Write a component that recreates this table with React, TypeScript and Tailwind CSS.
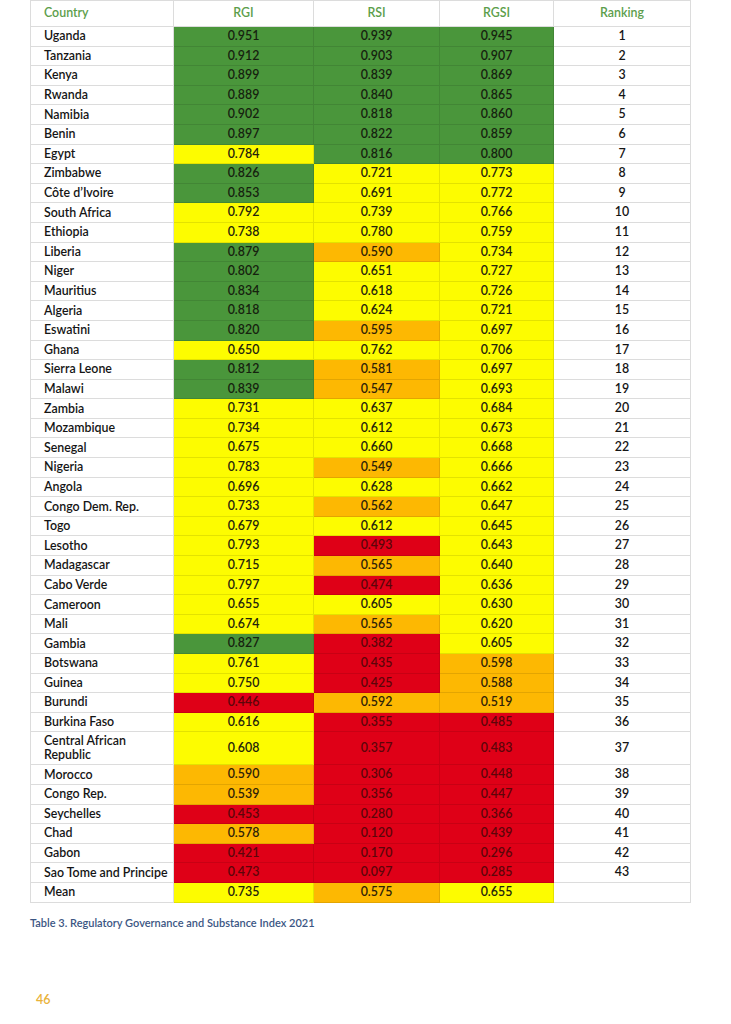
import React from "react"

type C = "G" | "Y" | "O" | "R"

const rows: [string, string, C, string, C, string, C, string][] = [
  ["Uganda", "0.951", "G", "0.939", "G", "0.945", "G", "1"],
  ["Tanzania", "0.912", "G", "0.903", "G", "0.907", "G", "2"],
  ["Kenya", "0.899", "G", "0.839", "G", "0.869", "G", "3"],
  ["Rwanda", "0.889", "G", "0.840", "G", "0.865", "G", "4"],
  ["Namibia", "0.902", "G", "0.818", "G", "0.860", "G", "5"],
  ["Benin", "0.897", "G", "0.822", "G", "0.859", "G", "6"],
  ["Egypt", "0.784", "Y", "0.816", "G", "0.800", "G", "7"],
  ["Zimbabwe", "0.826", "G", "0.721", "Y", "0.773", "Y", "8"],
  ["Côte d’Ivoire", "0.853", "G", "0.691", "Y", "0.772", "Y", "9"],
  ["South Africa", "0.792", "Y", "0.739", "Y", "0.766", "Y", "10"],
  ["Ethiopia", "0.738", "Y", "0.780", "Y", "0.759", "Y", "11"],
  ["Liberia", "0.879", "G", "0.590", "O", "0.734", "Y", "12"],
  ["Niger", "0.802", "G", "0.651", "Y", "0.727", "Y", "13"],
  ["Mauritius", "0.834", "G", "0.618", "Y", "0.726", "Y", "14"],
  ["Algeria", "0.818", "G", "0.624", "Y", "0.721", "Y", "15"],
  ["Eswatini", "0.820", "G", "0.595", "O", "0.697", "Y", "16"],
  ["Ghana", "0.650", "Y", "0.762", "Y", "0.706", "Y", "17"],
  ["Sierra Leone", "0.812", "G", "0.581", "O", "0.697", "Y", "18"],
  ["Malawi", "0.839", "G", "0.547", "O", "0.693", "Y", "19"],
  ["Zambia", "0.731", "Y", "0.637", "Y", "0.684", "Y", "20"],
  ["Mozambique", "0.734", "Y", "0.612", "Y", "0.673", "Y", "21"],
  ["Senegal", "0.675", "Y", "0.660", "Y", "0.668", "Y", "22"],
  ["Nigeria", "0.783", "Y", "0.549", "O", "0.666", "Y", "23"],
  ["Angola", "0.696", "Y", "0.628", "Y", "0.662", "Y", "24"],
  ["Congo Dem. Rep.", "0.733", "Y", "0.562", "O", "0.647", "Y", "25"],
  ["Togo", "0.679", "Y", "0.612", "Y", "0.645", "Y", "26"],
  ["Lesotho", "0.793", "Y", "0.493", "R", "0.643", "Y", "27"],
  ["Madagascar", "0.715", "Y", "0.565", "O", "0.640", "Y", "28"],
  ["Cabo Verde", "0.797", "Y", "0.474", "R", "0.636", "Y", "29"],
  ["Cameroon", "0.655", "Y", "0.605", "Y", "0.630", "Y", "30"],
  ["Mali", "0.674", "Y", "0.565", "O", "0.620", "Y", "31"],
  ["Gambia", "0.827", "G", "0.382", "R", "0.605", "Y", "32"],
  ["Botswana", "0.761", "Y", "0.435", "R", "0.598", "O", "33"],
  ["Guinea", "0.750", "Y", "0.425", "R", "0.588", "O", "34"],
  ["Burundi", "0.446", "R", "0.592", "O", "0.519", "O", "35"],
  ["Burkina Faso", "0.616", "Y", "0.355", "R", "0.485", "R", "36"],
  ["Central African Republic", "0.608", "Y", "0.357", "R", "0.483", "R", "37"],
  ["Morocco", "0.590", "O", "0.306", "R", "0.448", "R", "38"],
  ["Congo Rep.", "0.539", "O", "0.356", "R", "0.447", "R", "39"],
  ["Seychelles", "0.453", "R", "0.280", "R", "0.366", "R", "40"],
  ["Chad", "0.578", "O", "0.120", "R", "0.439", "R", "41"],
  ["Gabon", "0.421", "R", "0.170", "R", "0.296", "R", "42"],
  ["Sao Tome and Principe", "0.473", "R", "0.097", "R", "0.285", "R", "43"],
  ["Mean", "0.735", "Y", "0.575", "O", "0.655", "Y", ""],
]

const fill: Record<C, string> = {
  G: "bg-[#4a963b] text-[#16220f]",
  Y: "bg-[#fdfc00] text-[#24240c]",
  O: "bg-[#fdb802] text-[#2e2208]",
  R: "bg-[#df0017] text-[#5c0509]",
}

const cols = "grid grid-cols-[143px_140px_126px_114px_137px]"

function Cell({ c, v }: { c: C; v: string }) {
  return (
    <div className={`flex items-center justify-center border-r border-b border-black/10 ${fill[c]}`}>{v}</div>
  )
}

export default function App() {
  return (
    <div
      className="relative h-[1024px] w-[731px] bg-white"
      style={{ fontFamily: "Lato, 'Open Sans', sans-serif" }}
    >
      <div className="ml-[30px] w-[661px] border-l border-t border-[#dcdcdc] text-[12.4px] font-semibold">
        {/* header */}
        <div className={`${cols} h-[26px] text-[#5c9e4b]`}>
          <div className="flex items-center border-r border-b border-[#dcdcdc] pl-[13px]">Country</div>
          <div className="flex items-center justify-center border-r border-b border-[#dcdcdc]">RGI</div>
          <div className="flex items-center justify-center border-r border-b border-[#dcdcdc]">RSI</div>
          <div className="flex items-center justify-center border-r border-b border-[#dcdcdc]">RGSI</div>
          <div className="flex items-center justify-center border-r border-b border-[#dcdcdc]">Ranking</div>
        </div>

        {rows.map((r) => {
          const tall = r[0].length > 22
          return (
            <div key={r[0]} className={`${cols} ${tall ? "h-[33px]" : "h-[19.6px]"} text-[#151515]`}>
              <div className="flex items-center border-r border-b border-[#dcdcdc] pl-[13px] leading-[14px]">
                {tall ? (
                  <span>
                    Central African
                    <br />
                    Republic
                  </span>
                ) : (
                  r[0]
                )}
              </div>
              <Cell c={r[2]} v={r[1]} />
              <Cell c={r[4]} v={r[3]} />
              <Cell c={r[6]} v={r[5]} />
              <div className="flex items-center justify-center border-r border-b border-[#dcdcdc]">{r[7]}</div>
            </div>
          )
        })}
      </div>

      <p className="ml-[30px] mt-[12px] text-[11px] font-semibold text-[#3b5683]">
        Table 3. Regulatory Governance and Substance Index 2021
      </p>

      <p className="ml-[36px] mt-[60px] text-[12.5px] font-semibold text-[#e9b23a]">46</p>
    </div>
  )
}
